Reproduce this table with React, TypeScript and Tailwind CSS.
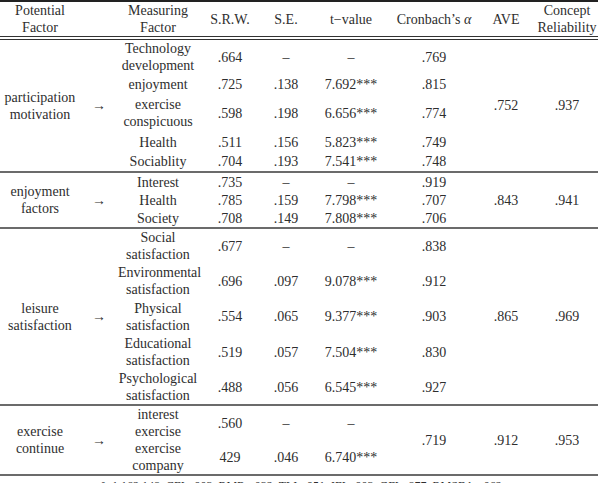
import React from "react";

type Row = {
  mf: React.ReactNode;
  srw: string;
  se: string;
  t: string;
  c?: string;
  h: string;
};

type Block = {
  pf: React.ReactNode;
  ave: string;
  cr: string;
  cSpan?: string;
  rows: Row[];
};

const blocks: Block[] = [
  {
    pf: (
      <>
        participation
        <br />
        motivation
      </>
    ),
    ave: ".752",
    cr: ".937",
    rows: [
      { mf: <>Technology<br />development</>, srw: ".664", se: "–", t: "–", c: ".769", h: "h-[35px]" },
      { mf: "enjoyment", srw: ".725", se: ".138", t: "7.692***", c: ".815", h: "h-[20px]" },
      { mf: <>exercise<br />conspicuous</>, srw: ".598", se: ".198", t: "6.656***", c: ".774", h: "h-[38px]" },
      { mf: "Health", srw: ".511", se: ".156", t: "5.823***", c: ".749", h: "h-[20px]" },
      { mf: "Sociablity", srw: ".704", se: ".193", t: "7.541***", c: ".748", h: "h-[20px]" },
    ],
  },
  {
    pf: (
      <>
        enjoyment
        <br />
        factors
      </>
    ),
    ave: ".843",
    cr: ".941",
    rows: [
      { mf: "Interest", srw: ".735", se: "–", t: "–", c: ".919", h: "h-[19px]" },
      { mf: "Health", srw: ".785", se: ".159", t: "7.798***", c: ".707", h: "h-[19px]" },
      { mf: "Society", srw: ".708", se: ".149", t: "7.808***", c: ".706", h: "h-[18px]" },
    ],
  },
  {
    pf: (
      <>
        leisure
        <br />
        satisfaction
      </>
    ),
    ave: ".865",
    cr: ".969",
    rows: [
      { mf: <>Social<br />satisfaction</>, srw: ".677", se: "–", t: "–", c: ".838", h: "h-[35px]" },
      { mf: <>Environmental<br />satisfaction</>, srw: ".696", se: ".097", t: "9.078***", c: ".912", h: "h-[36px]" },
      { mf: <>Physical<br />satisfaction</>, srw: ".554", se: ".065", t: "9.377***", c: ".903", h: "h-[35px]" },
      { mf: <>Educational<br />satisfaction</>, srw: ".519", se: ".057", t: "7.504***", c: ".830", h: "h-[36px]" },
      { mf: <>Psychological<br />satisfaction</>, srw: ".488", se: ".056", t: "6.545***", c: ".927", h: "h-[35px]" },
    ],
  },
  {
    pf: (
      <>
        exercise
        <br />
        continue
      </>
    ),
    ave: ".912",
    cr: ".953",
    cSpan: ".719",
    rows: [
      { mf: <>interest<br />exercise</>, srw: ".560", se: "–", t: "–", h: "h-[34px]" },
      { mf: <>exercise<br />company</>, srw: "429", se: ".046", t: "6.740***", h: "h-[33px]" },
    ],
  },
];

const cell = "p-0 text-center align-middle";

export default function App() {
  return (
    <div className="w-[598px] bg-white font-['Liberation_Serif',serif] text-[14px] leading-[17px] text-[#2e2e2e]">
      <div className="border-t-[2px] border-[#222]">
        <table className="w-[598px] table-fixed border-collapse">
          <colgroup>
            <col className="w-[80px]" />
            <col className="w-[38px]" />
            <col className="w-[80px]" />
            <col className="w-[64px]" />
            <col className="w-[48px]" />
            <col className="w-[82px]" />
            <col className="w-[84px]" />
            <col className="w-[60px]" />
            <col className="w-[62px]" />
          </colgroup>
          <thead>
            <tr className="h-[34px] border-b-[4px] border-double border-[#333]">
              <th className={`${cell} font-normal`}>
                Potential
                <br />
                Factor
              </th>
              <th className={`${cell} font-normal`}></th>
              <th className={`${cell} font-normal`}>
                Measuring
                <br />
                Factor
              </th>
              <th className={`${cell} font-normal`}>S.R.W.</th>
              <th className={`${cell} font-normal`}>S.E.</th>
              <th className={`${cell} font-normal`}>t−value</th>
              <th className={`${cell} font-normal whitespace-nowrap`}>
                Cronbach’s <span className="italic">α</span>
              </th>
              <th className={`${cell} font-normal`}>AVE</th>
              <th className={`${cell} font-normal`}>
                Concept
                <br />
                Reliability
              </th>
            </tr>
          </thead>
          {blocks.map((b, bi) => (
            <tbody key={bi} className="border-b-[2px] border-[#6b6b6b]">
              {b.rows.map((r, ri) => (
                <tr key={ri} className={r.h}>
                  {ri === 0 && (
                    <>
                      <td rowSpan={b.rows.length} className={cell}>
                        {b.pf}
                      </td>
                      <td rowSpan={b.rows.length} className={`${cell} text-[14px]`}>
                        →
                      </td>
                    </>
                  )}
                  <td className={cell}>{r.mf}</td>
                  <td className={cell}>{r.srw}</td>
                  <td className={cell}>{r.se}</td>
                  <td className={`${cell} whitespace-nowrap`}>{r.t}</td>
                  {b.cSpan ? (
                    ri === 0 && (
                      <td rowSpan={b.rows.length} className={cell}>
                        {b.cSpan}
                      </td>
                    )
                  ) : (
                    <td className={cell}>{r.c}</td>
                  )}
                  {ri === 0 && (
                    <>
                      <td rowSpan={b.rows.length} className={cell}>
                        {b.ave}
                      </td>
                      <td rowSpan={b.rows.length} className={cell}>
                        {b.cr}
                      </td>
                    </>
                  )}
                </tr>
              ))}
            </tbody>
          ))}
        </table>
      </div>
      <div className="pt-[3px] text-center text-[12px] leading-[14px] whitespace-nowrap">
        χ²=1,162.148, CFI=.903, RMR=.032, TLI=.951, IFI=.903, GFI=.877, RMSEA=.062
      </div>
    </div>
  );
}
